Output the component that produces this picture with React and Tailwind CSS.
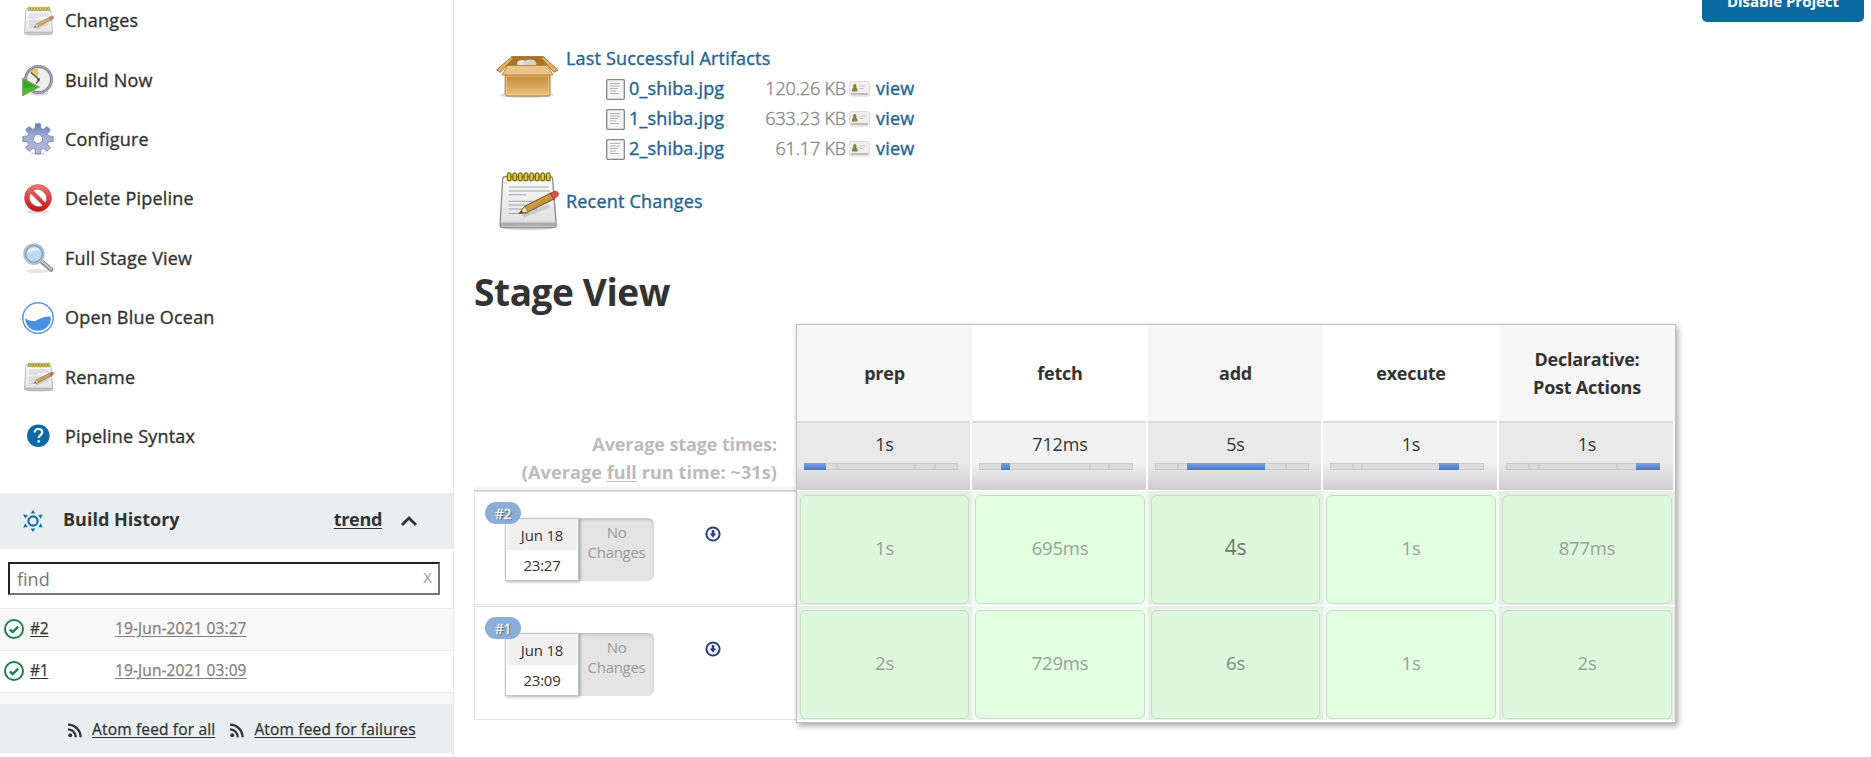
import React from "react";

function Notepad({ size, className = "" }) {
  return (
    <svg width={size} height={size} viewBox="0 0 48 48" className={`shrink-0 ${className}`}>
      <defs>
        <linearGradient id="paper" x1="0" y1="0" x2="0" y2="1">
          <stop offset="0" stopColor="#fbfbfb" />
          <stop offset="1" stopColor="#dededf" />
        </linearGradient>
        <linearGradient id="pencil" x1="0" y1="0" x2="1" y2="1">
          <stop offset="0" stopColor="#e8c06a" />
          <stop offset="1" stopColor="#a8741c" />
        </linearGradient>
      </defs>
      <g transform="translate(.8 .5) scale(1 .965)">
        <ellipse cx="24" cy="45.600" rx="19" ry="1.400" fill="#000" opacity=".18" />
        <path d="M6.500 5.500h34.300c.9 0 1.500.6 1.600 1.500l2.600 34v2.600c0 .8-.6 1.300-1.300 1.300H4.500c-.8 0-1.400-.6-1.400-1.400V41L5 7c0-.9.6-1.500 1.500-1.500z" fill="url(#paper)" stroke="#8b8d88" strokeWidth="1" />
        <path d="M3.800 41h40.600v2.800H3.800z" fill="#aaacab" />
        <path d="M9.500 13.500h30M9.500 16.500h31M9.500 19.500h13M9.500 24.500h29M9.500 27.500h25M9.500 30.500h21M9.500 34h14" stroke="#a3a5a5" strokeWidth=".8" />
        <path d="M8 3.200h33v5.500H8z" fill="#7b7415" opacity=".5" />
        <g fill="#e0cf37" stroke="#766c0b" strokeWidth=".8">
          {[9, 13.2, 17.4, 21.6, 25.8, 30, 34.2, 38.4].map((x) => (
            <rect key={x} x={x - 0.5} y="2.500" width="2.600" height="6.200" rx="1.300" />
          ))}
        </g>
        <path d="M20 36l20-8" stroke="#000" strokeWidth="3" opacity=".12" />
        <path d="M17.500 34l4-5.500L41 18.200l2.400 4.600L24 32.800z" fill="url(#pencil)" stroke="#7a5620" strokeWidth=".8" />
        <path d="M17.500 34l4-5.500 2.500 4.300z" fill="#f0dfb8" stroke="#7a5a20" strokeWidth=".5" />
        <path d="M17.500 34l1.700-2.300 1 1.600z" fill="#333" />
        <path d="M40.500 18.500l3.200-1.600c1.300-.5 3 .4 3 2 0 1.200-.4 1.800-1.300 2.300l-2.200 1.200z" fill="#e0504a" stroke="#9b2d25" strokeWidth=".6" />
      </g>
    </svg>
  );
}

function Clock() {
  return (
    <svg width="32" height="32" viewBox="0 0 32 32">
      <ellipse cx="17" cy="30" rx="10" ry="1.500" fill="#000" opacity=".15" />
      <circle cx="16.500" cy="15.500" r="13" fill="#eeeeea" stroke="#85839a" strokeWidth="3" />
      <circle cx="16.500" cy="15.500" r="13.300" fill="none" stroke="#b9b8c8" strokeWidth=".8" />
      <path d="M16 14L7.500 8.500A11 11 0 0 1 16 4.500z" fill="#dccd5c" />
      <path d="M9 8.500l8 7M17.500 15.500l-3.500 4" stroke="#555" strokeWidth="1.300" />
      <circle cx="16.500" cy="15.500" r="1.400" fill="#555" />
      <path d="M.5 14v18L17.500 23z" fill="#4cba34" stroke="#7f9a78" strokeWidth=".8" />
      <path d="M1.500 16v8l13-1z" fill="#36a322" />
    </svg>
  );
}

function Gear() {
  return (
    <svg width="32" height="32" viewBox="0 0 32 32">
      <defs>
        <linearGradient id="gear" x1="0" y1="0" x2="0" y2="1">
          <stop offset="0" stopColor="#5f7db0" />
          <stop offset=".4" stopColor="#a0aed4" />
          <stop offset="1" stopColor="#b4b6d6" />
        </linearGradient>
      </defs>
      <ellipse cx="16" cy="30.500" rx="8" ry="1.200" fill="#000" opacity=".15" />
      <g fill="url(#gear)" stroke="#8089ad" strokeWidth=".9" strokeLinejoin="round">
        <path fillRule="evenodd" d="M13.600.8h4.800l.6 4.600 2.300 1 3.700-2.900 3.400 3.400-2.900 3.700 1 2.300 4.700.6v4.800l-4.700.6-1 2.300 2.900 3.700-3.400 3.400-3.700-2.900-2.300 1-.6 4.600h-4.800l-.6-4.600-2.300-1-3.700 2.900-3.400-3.400 2.900-3.700-1-2.300-4.700-.6v-4.800l4.700-.6 1-2.300-2.900-3.700L7 3.500l3.700 2.900 2.300-1zM16 11.400a4.500 4.500 0 1 0 0 9 4.500 4.500 0 0 0 0-9z" />
      </g>
    </svg>
  );
}

function Forbidden() {
  return (
    <svg width="32" height="32" viewBox="0 0 32 32">
      <defs>
        <linearGradient id="stop" x1="0" y1="0" x2="0" y2="1">
          <stop offset="0" stopColor="#e57a7a" />
          <stop offset="1" stopColor="#c81010" />
        </linearGradient>
      </defs>
      <ellipse cx="16" cy="28.800" rx="11" ry="1.800" fill="#000" opacity=".15" />
      <path fillRule="evenodd" fill="url(#stop)" stroke="#c23a3a" strokeWidth=".5" d="M16 1.500a13.500 13.500 0 1 0 0 27 13.500 13.500 0 0 0 0-27zM8.600 10.200L20.800 22.400A9 9 0 0 1 8.600 10.200zM11.200 7.600A9 9 0 0 1 23.400 19.800z" />
    </svg>
  );
}

function Magnifier() {
  return (
    <svg width="32" height="32" viewBox="0 0 32 32">
      <ellipse cx="16" cy="29" rx="12" ry="2" fill="#000" opacity=".1" />
      <path d="M19.500 19.500l9.500 8" stroke="#8c8c8c" strokeWidth="4.500" strokeLinecap="round" />
      <path d="M20 19.500l9 7.600" stroke="#c9c9c9" strokeWidth="2" strokeLinecap="round" />
      <circle cx="12" cy="12" r="9.500" fill="#bdd6f2" stroke="#b4bcc8" strokeWidth="2.600" />
      <circle cx="12" cy="12" r="8.200" fill="none" stroke="#6f92c2" strokeWidth="1" />
      <path d="M5 12a7 7 0 0 1 13-3c-4-1-8 0-13 3z" fill="#e4effb" />
    </svg>
  );
}

function Ocean() {
  return (
    <svg width="32" height="32" viewBox="0 0 32 32">
      <circle cx="16" cy="16" r="15.200" fill="#fff" stroke="#5a95dc" strokeWidth="1.500" />
      <path d="M3.300 15.800c2.200 2.600 5.200 3.600 8.700 3.200 5.500-.7 8.300-5.600 16.700-4.400 1 7.500-4.700 14.200-12.700 14.200S3.200 23 3.300 15.800z" fill="#4a90e2" />
    </svg>
  );
}

function Help() {
  return (
    <svg width="32" height="32" viewBox="0 0 32 32">
      <circle cx="16.300" cy="15.700" r="11.300" fill="#0b6aa2" />
      <path d="M12.600 12.600c0-2.100 1.700-3.600 3.900-3.600s3.800 1.400 3.800 3.300c0 2.600-3.600 2.900-3.600 5.600" fill="none" stroke="#fff" strokeWidth="2.200" />
      <rect x="15.500" y="20.200" width="2.300" height="2.300" fill="#fff" />
    </svg>
  );
}

function Box() {
  return (
    <svg width="64" height="64" viewBox="0 0 64 64" className="shrink-0">
      <defs>
        <linearGradient id="box" x1="0" y1="0" x2="0" y2="1">
          <stop offset="0" stopColor="#c48a35" />
          <stop offset="1" stopColor="#ecc07c" />
        </linearGradient>
      </defs>
      <ellipse cx="32" cy="51" rx="27" ry="3" fill="#000" opacity=".15" />
      <path d="M17 12.500h31l6 10H11z" fill="#a87429" stroke="#b37c2c" />
      <ellipse cx="27" cy="19.500" rx="5" ry="3.500" fill="#e6e4dc" />
      <ellipse cx="35" cy="19.500" rx="6.500" ry="4" fill="#d8d5cb" />
      <path d="M17 12.500L1.500 26l4 2.300L18 14.500zM48 12.500L63 26l-4 2.300L46.500 14.500z" fill="#deb06a" stroke="#a87530" strokeWidth="1" />
      <path d="M10.200 31h44.800v18.500c0 1.500-1 2.500-2.500 2.500H12.700c-1.500 0-2.500-1-2.500-2.500z" fill="url(#box)" stroke="#a07030" />
      <path d="M11.400 32h42.400v17c0 1-.6 1.700-1.500 1.700H12.900c-.9 0-1.500-.7-1.500-1.700z" fill="none" stroke="#f6d59b" strokeWidth=".8" />
      <path d="M12.500 21.500h40l5.500 9.500h-51z" fill="#ebc386" stroke="#b98a45" />
    </svg>
  );
}

function Doc() {
  return (
    <svg width="19" height="21" viewBox="0 0 19 21">
      <rect x=".7" y=".7" width="17.600" height="19.600" rx="1" fill="#f4f4f4" stroke="#85878a" strokeWidth="1.300" />
      <path d="M4 4.500h10M4 7h10M4 9.500h8M4 12h6M4 14.500h9" stroke="#b4b4b4" strokeWidth="1" />
    </svg>
  );
}

function Fingerprint() {
  return (
    <svg width="21" height="16" viewBox="0 0 21 16">
      <rect x=".5" y=".5" width="20" height="14.500" rx="1.500" fill="#efefef" stroke="#dcdcdc" />
      <path d="M2 12h17v2H2z" fill="#bdbdbd" />
      <path d="M3 10.500c-.3-2 .5-3.300 1.300-3.800C3.800 4.500 4.500 3 5.800 3s2 1.500 1.500 3.700c.8.500 1.600 1.800 1.200 3.800z" fill="#8a8138" />
      <path d="M10.500 5h6M10.500 7.500h4" stroke="#c4c4c4" />
    </svg>
  );
}

function HistorySun() {
  return (
    <svg width="20" height="22" viewBox="0 0 20 22" className="text-[#1d6fa5]">
      <circle cx="10" cy="11" r="4.600" fill="none" stroke="currentColor" strokeWidth="2.200" />
      <path d="M10 0l2.400 3.400H7.600zM10 22l2.400-3.400H7.600zM.2 4.600l4.500.3-2.400 3.900zM19.800 4.600l-4.500.3 2.400 3.900zM.2 17.400l4.500-.3-2.400-3.900zM19.800 17.400l-4.500-.3 2.400-3.900z" fill="currentColor" />
    </svg>
  );
}

function Success() {
  return (
    <svg width="20" height="20" viewBox="0 0 20 20">
      <circle cx="10" cy="10" r="9" fill="#fff" stroke="#1c8048" strokeWidth="2" />
      <path d="M5.800 10.400l2.900 2.700 5.500-5.400" fill="none" stroke="#1c8048" strokeWidth="2.500" />
    </svg>
  );
}

function Rss() {
  return (
    <svg width="14" height="15" viewBox="0 0 14 15" fill="none" stroke="#333" strokeWidth="2.300">
      <circle cx="2.200" cy="12.300" r="2" fill="#333" stroke="none" />
      <path d="M0 6.400a7.600 7.600 0 0 1 7.700 7.900M0 1.600a12.600 12.600 0 0 1 12.600 12.700" />
    </svg>
  );
}

function Download() {
  return (
    <svg width="16" height="16" viewBox="0 0 16 16">
      <circle cx="8" cy="8" r="6.600" fill="#fff" stroke="#27417f" strokeWidth="2" />
      <path d="M6.700 4h2.600v3.600h2L8 11.700 4.700 7.600h2z" fill="#27417f" />
    </svg>
  );
}

const tasks = [
  ["Changes", <Notepad size={32} className="opacity-80" />],
  ["Build Now", <Clock />],
  ["Configure", <Gear />],
  ["Delete Pipeline", <Forbidden />],
  ["Full Stage View", <Magnifier />],
  ["Open Blue Ocean", <Ocean />],
  ["Rename", <Notepad size={32} className="opacity-90" />],
  ["Pipeline Syntax", <Help />],
];

const builds = [
  { id: "#2", date: "19-Jun-2021 03:27", bg: "bg-[#f8f8f8]" },
  { id: "#1", date: "19-Jun-2021 03:09", bg: "bg-white" },
];

function Sidebar() {
  return (
    <aside className="flex h-[757px] w-[454px] shrink-0 flex-col border-r border-[#e3e7e9]">
      <nav className="-mt-[9px] h-[502px] shrink-0">
        {tasks.map(([label, icon]) => (
          <a key={label} className="flex h-[59.4px] items-center gap-[11px] pl-[22px] text-[18px] tracking-[0.2px] [-webkit-text-stroke:0.35px]">
            {icon}
            <span>{label}</span>
          </a>
        ))}
      </nav>
      <div className="flex h-14 shrink-0 items-center bg-[#e9eef0] pl-[23px] font-bold">
        <HistorySun />
        <span className="ml-5 pb-[3px] text-[18px]">Build History</span>
        <a className="ml-auto pb-[3px] text-[18px] tracking-[-0.3px] underline underline-offset-2">trend</a>
        <svg width="18" height="12" viewBox="0 0 18 12" className="mr-[35px] ml-[18px]">
          <path d="M2 10l7-7 7 7" fill="none" stroke="#333" strokeWidth="2.800" />
        </svg>
      </div>
      <div className="mt-[13px] ml-2 flex h-[33px] w-[432px] shrink-0 items-center justify-between border-2 border-[#767676] border-t-[#222] border-l-[#222] pr-1.5 pl-[7px]">
        <span className="pt-px text-[18px] text-[#777]">find</span>
        <span className="pb-0.5 text-[15px] text-[#999]">X</span>
      </div>
      <div className="mt-[13px] h-24 shrink-0 bg-[#f8f8f8] text-[15.5px]">
        {builds.map(({ id, date, bg }) => (
          <div key={id} className={`flex h-[42px] items-center border-t border-[#e9edef] pb-px pl-[4px] ${bg}`}>
            <Success />
            <a className="ml-[6px] w-[85px] pb-px tracking-[-0.2px] underline underline-offset-2 [-webkit-text-stroke:0.25px]">{id}</a>
            <a className="pb-px tracking-[0.1px] text-[#808080] underline underline-offset-2 [-webkit-text-stroke:0.25px]">{date}</a>
          </div>
        ))}
        <div className="border-t border-[#e9edef]" />
      </div>
      <div className="flex h-[49px] shrink-0 items-center bg-[#e9eef0] pt-[3px] pl-[68px] text-[15.5px] tracking-[0.17px] [-webkit-text-stroke:0.25px]">
        <Rss />
        <a className="ml-2.5 underline underline-offset-2">Atom feed for all</a>
        <span className="ml-[15px]"><Rss /></span>
        <a className="ml-2.5 underline underline-offset-2">Atom feed for failures</a>
      </div>
    </aside>
  );
}

const files = [
  ["0_shiba.jpg", "120.26 KB"],
  ["1_shiba.jpg", "633.23 KB"],
  ["2_shiba.jpg", "61.17 KB"],
];

const stages = [
  { name: "prep", avg: "1s", start: 0, len: 22, ticks: [32, 110, 130], runs: ["1s", "2s"] },
  { name: "fetch", avg: "712ms", start: 22, len: 9, ticks: [110, 129], runs: ["695ms", "729ms"] },
  { name: "add", avg: "5s", start: 32, len: 78, ticks: [22, 130], runs: ["4s", "6s"] },
  { name: "execute", avg: "1s", start: 109, len: 20, ticks: [22, 31], runs: ["1s", "1s"] },
  { name: "Declarative: Post Actions", avg: "1s", start: 130, len: 24, ticks: [22, 32, 110], runs: ["877ms", "2s"] },
];

function durationStyle(value) {
  if (value === "4s") return "text-[21px] text-[#6c786c]";
  if (value === "6s") return "text-[18.5px] text-[#7f8b7f]";
  return "text-[18.5px] text-[#95a395]";
}

function Run({ id, time }) {
  return (
    <div className="h-[115px] border-t border-[#e0e0e0]">
      <div className="flex h-[113px] border-b border-l border-[#e4e4e4] pt-[26px] pl-[30px]">
        <div className="relative h-[63px] w-[74px] border border-[#b8c8c6] text-center text-[15px] tracking-[-0.2px] shadow-[1px_1px_3px_rgba(0,0,0,0.3)]">
          <div className="h-[31px] border-x border-white bg-[#f0f0f0] leading-[33px]">Jun 18</div>
          <div className="leading-[30px]">{time}</div>
          <span className="absolute -top-[17px] -left-[21px] flex h-[22px] w-9 items-center justify-center rounded-full bg-[#8aaed6] text-[14px] font-medium text-white [-webkit-text-stroke:0.3px] [text-shadow:1px_1px_1px_#456]">
            {id}
          </span>
        </div>
        <div className="h-[63px] w-[75px] rounded-r-[6px] bg-[#e4e4e4] pt-1 text-center text-[15px] leading-[20px] tracking-[-0.3px] text-[#999] shadow-[inset_0_2px_3px_rgba(0,0,0,0.15)]">
          No<br />Changes
        </div>
        <div className="mt-2 ml-[51px]"><Download /></div>
      </div>
    </div>
  );
}

function StageView() {
  return (
    <section className="flex">
      <div className="w-[322px] pt-[106px]">
        <div className="h-[60px] pr-[19px] text-right text-[18px] leading-7 font-bold tracking-[-0.1px] text-[#bbb]">
          Average stage times:
          <div className="tracking-[0.1px]">
            (Average <span className="underline underline-offset-2">full</span> run time: ~31s)
          </div>
        </div>
        <div className="h-px bg-[#ccc] shadow-[0_-2px_3px_rgba(0,0,0,0.15)]" />
        <Run id="#2" time="23:27" />
        <Run id="#1" time="23:09" />
      </div>
      <div className="grid h-[399px] w-[880px] grid-cols-[175px_176px_175px_176px_176px] border border-[#bfbfbf] bg-white shadow-[2px_3px_6px_rgba(0,0,0,0.35)]">
        {stages.map((s, i) => {
          const shaded = i % 2 === 0;
          return (
            <div key={s.name} className="flex flex-col">
              <div className={`flex h-24 items-center justify-center px-6 pb-px text-center text-[18px] leading-7 font-bold tracking-[-0.25px] ${shaded ? "bg-[#f6f6f6]" : "bg-white"}`}>
                {s.name}
              </div>
              <div className={`mr-0.5 h-[69px] border-t-2 border-[#dcdcdc] bg-linear-to-b from-60% to-[#cfcdd0] pt-[9px] text-center ${shaded ? "from-[#e9e9e9]" : "from-[#f2f2f2]"}`}>
                <div className="pl-0.5 text-[18px] leading-6 tracking-[-0.1px]">{s.avg}</div>
                <div className="relative mt-[7px] ml-[7px] h-[7px] w-[154px] border border-[#c9c9c9] bg-[#dcdcdc]">
                  {s.ticks.map((t) => (
                    <span key={t} className="absolute top-0 h-[5px] w-0.5 bg-[#cecece]" style={{ left: t - 1 }} />
                  ))}
                  <span className="absolute -top-px h-[7px] bg-linear-to-b from-[#7ba3dd] to-[#4a77c4]" style={{ left: s.start - 1, width: s.len }} />
                </div>
              </div>
              {s.runs.map((r, j) => (
                <div key={j} className={`h-[115px] border-t border-white px-[3px] pt-1 ${shaded ? "bg-[#e6efe5]" : "bg-[#effbef]"}`}>
                  <div className={`flex h-[109px] items-center justify-center rounded-[6px] border border-[#c9dcc8] pb-[3px] tracking-[-0.2px] ${shaded ? "bg-[#ddf7dc]" : "bg-[#e3ffe2]"} ${durationStyle(r)}`}>
                    {r}
                  </div>
                </div>
              ))}
            </div>
          );
        })}
      </div>
    </section>
  );
}

export default function App() {
  return (
    <div className="flex h-[757px] overflow-hidden bg-white font-['Open_Sans','Noto_Sans',sans-serif] text-[#333]">
      <Sidebar />
      <main className="flex min-w-0 flex-1 flex-col pl-5">
        <div className="mr-[7px] h-[22px] w-[162px] shrink-0 self-end rounded-b-[5px] bg-[#0b6aa2] text-center text-[15px] leading-[3px] font-bold text-white">
          Disable Project
        </div>
        <div className="mt-[22px] ml-[21px] flex h-[121px] shrink-0 gap-[7px] text-[18px] leading-[30px] tracking-[0.17px] text-[#1f6694] [-webkit-text-stroke:0.4px]">
          <Box />
          <div className="-mt-px">
            <a>Last Successful Artifacts</a>
            {files.map(([name, size]) => (
              <div key={name} className="flex h-[30px] items-center pl-10">
                <span className="pt-0.5"><Doc /></span>
                <a className="ml-1 w-[107px]">{name}</a>
                <span className="w-[110px] text-right font-light tracking-[-0.15px] text-[#888]">{size}</span>
                <span className="mr-1.5 ml-[3px] pt-0.5"><Fingerprint /></span>
                <a>view</a>
              </div>
            ))}
          </div>
        </div>
        <div className="ml-[21px] flex h-[72px] shrink-0 items-center gap-[7px] text-[18px] tracking-[0.2px] text-[#1f6694] [-webkit-text-stroke:0.4px]">
          <Notepad size={64} />
          <a>Recent Changes</a>
        </div>
        <h1 className="mt-[30px] h-[57px] shrink-0 text-[37px] leading-[50px] font-bold tracking-[-0.4px]">Stage View</h1>
        <StageView />
      </main>
    </div>
  );
}
